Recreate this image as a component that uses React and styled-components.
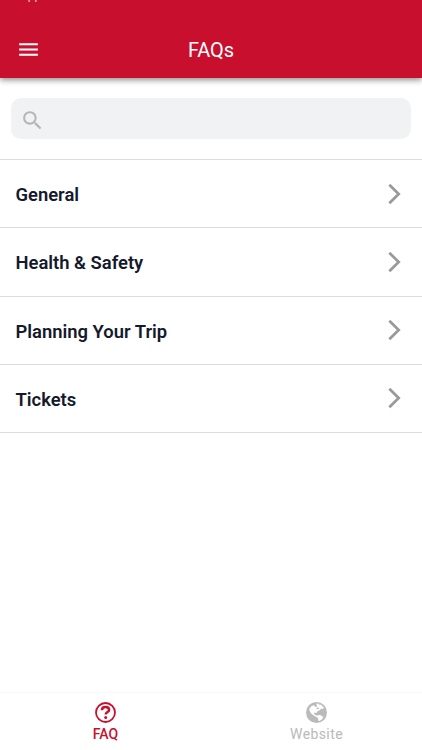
import React from 'react';
import styled, { createGlobalStyle } from 'styled-components';
import { MdMenu, MdSearch } from 'react-icons/md';

const GlobalStyle = createGlobalStyle`
  * {
    box-sizing: border-box;
  }
  body {
    margin: 0;
    background: #fff;
    font-family: Roboto, "Liberation Sans", sans-serif;
  }
`;

const Screen = styled.div`
  display: flex;
  flex-direction: column;
  height: 750px;
  overflow: hidden;
`;

const Header = styled.header`
  height: 78px;
  flex: none;
  display: flex;
  flex-direction: column;
  background: #c8102e;
  color: #fff;
  box-shadow: 0 2px 6px rgba(0, 0, 0, 0.45);
`;

const StatusBar = styled.div`
  height: 21px;
  padding-left: 20px;
  overflow: hidden;
  font-size: 12px;
  line-height: 14px;
  color: #f3c3ca;

  span {
    display: block;
    margin-top: -12px;
  }
`;

const Toolbar = styled.div`
  flex: 1;
  display: grid;
  grid-template-columns: 58px 1fr 58px;
  align-items: center;
`;

const MenuButton = styled.button`
  display: flex;
  margin: 0;
  padding: 0 0 1px 16px;
  border: none;
  background: none;
  color: #fff;
`;

const Title = styled.h1`
  margin: 0;
  padding-top: 1px;
  font-family: Roboto, sans-serif;
  font-size: 20px;
  font-weight: 400;
  line-height: 24px;
  letter-spacing: -0.1px;
  text-align: center;
`;

const SearchBox = styled.label`
  flex: none;
  display: flex;
  align-items: center;
  height: 41px;
  margin: 20px 11px;
  padding: 3px 9px 0;
  border-radius: 10px;
  background: #f0f2f4;
  color: #b6b6b6;

  input {
    flex: 1;
    border: none;
    outline: none;
    background: none;
  }
`;

const List = styled.ul`
  flex: 1;
  margin: 0;
  padding: 0;
  border-top: 1px solid #dcdcdc;
  list-style: none;
`;

const Row = styled.li`
  display: flex;
  align-items: center;
  justify-content: space-between;
  height: 68.25px;
  padding: 0 21px 0 15.5px;
  border-bottom: 1px solid #dcdcdc;
  color: #141a2b;
  font-size: 18.4px;
  font-weight: 600;
`;

const RowLabel = styled.span`
  padding-top: 2px;
`;

const TabBar = styled.nav`
  flex: none;
  display: grid;
  grid-template-columns: 1fr 1fr;
  height: 58px;
  border-top: 1px solid #f8f8f8;
`;

const Tab = styled.button`
  display: flex;
  flex-direction: column;
  align-items: center;
  gap: 2px;
  margin: 0;
  padding: 9px 0 0;
  border: none;
  background: none;
  color: ${(props) => (props.$active ? '#c8102e' : '#bababa')};
  font-family: inherit;
  font-size: 14px;
  font-weight: ${(props) => (props.$active ? 500 : 400)};
  line-height: 18px;
  letter-spacing: ${(props) => (props.$active ? '0' : '0.4px')};
`;

const topics = ['General', 'Health & Safety', 'Planning Your Trip', 'Tickets'];

function Chevron() {
  return (
    <svg width="13" height="22" viewBox="0 0 13 22" fill="none">
      <path d="M1.3 1.8L10.7 11L1.3 20.2" stroke="#999" strokeWidth="2.7" />
    </svg>
  );
}

function HelpIcon() {
  return (
    <svg width="21" height="21" viewBox="0 0 21 21" fill="none" stroke="currentColor">
      <circle cx="10.5" cy="10.5" r="9.5" strokeWidth="1.8" />
      <path d="M6.9 8.2C7 6.1 8.4 5 10.5 5C12.7 5 14.1 6.1 14.1 7.9C14.1 10.1 10.7 10.1 10.7 12.6" strokeWidth="2.5" />
      <circle cx="10.7" cy="15.4" r="1.5" fill="currentColor" stroke="none" />
    </svg>
  );
}

function GlobeIcon() {
  return (
    <svg width="21" height="21" viewBox="0 0 21 21">
      <circle cx="10.5" cy="10.5" r="10.5" fill="currentColor" />
      <path
        d="M10.2 1.8L12.4 1.5L13.1 2.8L15.2 2.7L18 5.8L16.5 7.2L15.4 6.4L13.6 8.2L11.8 9.1L10.3 11L8.2 10.6L8.3 12.4L10.1 13.1L11.2 14.5L10.4 15.2L7.8 13.6L5.2 11.6L3.6 9L3.4 6.4L5.5 3.9L8 3.3L9.5 4.9L11.3 4.4Z"
        fill="#fff"
      />
      <path d="M11.4 13.3L14.2 13.1L17.4 15L16.3 17.1L13.6 19.1L12.4 18.8L12.2 16.6L10.8 15Z" fill="#fff" />
      <path d="M10.4 6.2L12.2 5.2L13 6.4L11 7.5Z" fill="currentColor" />
    </svg>
  );
}

function App() {
  return (
    <Screen>
      <GlobalStyle />
      <Header>
        <StatusBar><span>App</span></StatusBar>
        <Toolbar>
          <MenuButton type="button" aria-label="Menu">
            <MdMenu size={25} />
          </MenuButton>
          <Title>FAQs</Title>
        </Toolbar>
      </Header>
      <SearchBox>
        <MdSearch size={25} />
        <input type="text" aria-label="Search" />
      </SearchBox>
      <List>
        {topics.map((topic) => (
          <Row key={topic}>
            <RowLabel>{topic}</RowLabel>
            <Chevron />
          </Row>
        ))}
      </List>
      <TabBar>
        <Tab type="button" $active>
          <HelpIcon />
          FAQ
        </Tab>
        <Tab type="button">
          <GlobeIcon />
          Website
        </Tab>
      </TabBar>
    </Screen>
  );
}

export default App;
